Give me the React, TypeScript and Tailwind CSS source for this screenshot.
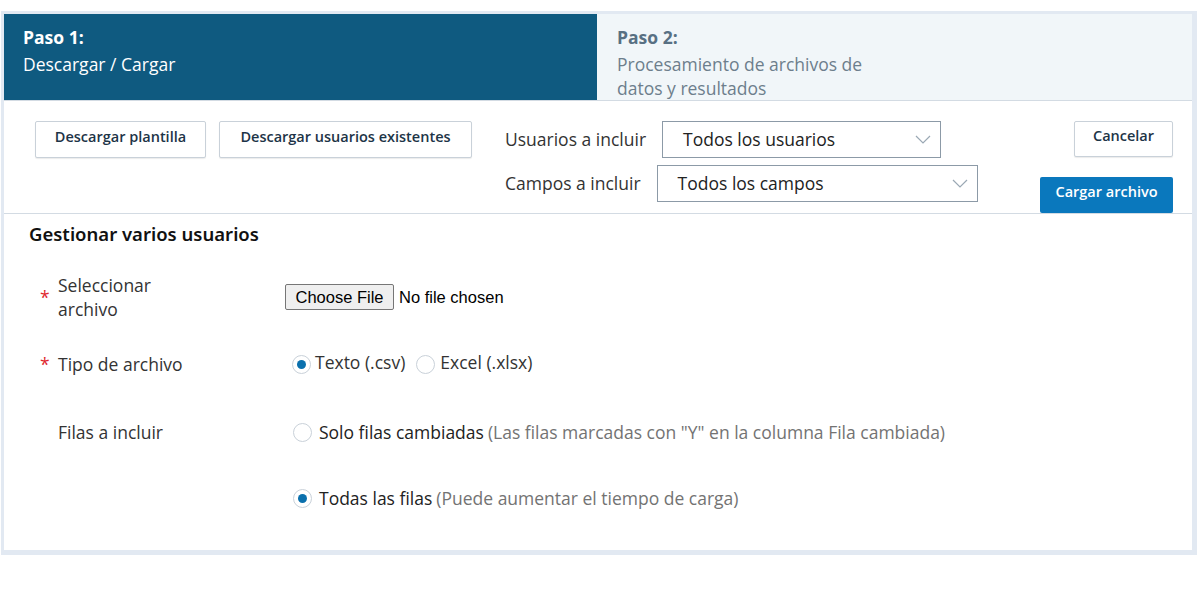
const font = "font-['Open_Sans',_'Noto_Sans',_sans-serif]";

function Radio({ checked }: { checked?: boolean }) {
  return (
    <span className="flex h-[19px] w-[19px] shrink-0 items-center justify-center rounded-full border border-[#c9d1d9] bg-white">
      {checked && <span className="h-[9px] w-[9px] rounded-full bg-[#0a70ad]" />}
    </span>
  );
}

function Chevron() {
  return (
    <svg width="16" height="9" viewBox="0 0 16 9" fill="none" className="shrink-0">
      <polyline points="1,1 8,8 15,1" stroke="#9aa8b4" strokeWidth="1.2" />
    </svg>
  );
}

function Select({ value, width }: { value: string; width: string }) {
  return (
    <div
      className={`flex h-[37px] items-center justify-between border border-[#8c9aa7] bg-white pl-[20px] pr-[9px] text-[17.5px] text-[#222] ${width}`}
    >
      <span>{value}</span>
      <Chevron />
    </div>
  );
}

function OutlineButton({ children, className = "" }: { children: React.ReactNode; className?: string }) {
  return (
    <button
      className={`h-[37px] rounded-[2px] border border-[#c9d1d9] bg-white pb-[6px] text-[14.5px] font-semibold text-[#1d3447] shadow-[0_1px_1px_rgba(0,0,0,0.08)] ${className}`}
    >
      {children}
    </button>
  );
}

export default function App() {
  return (
    <div className={`h-[615px] w-[1204px] bg-white pl-[1px] pt-[11px] ${font}`}>
      <div className="w-[1196px] border-b-[5px] border-l-[3px] border-r-[5px] border-t-[3px] border-[#e2e9f2]">
        {/* steps */}
        <div className="flex h-[87px] border-b border-[#d3dbe3]">
          <div className="w-[593px] bg-[#0f5a80] pl-[19px] pt-[11px] text-[17.5px] leading-[24px] text-white">
            <div className="mb-[3px] font-bold">Paso 1:</div>
            <div>Descargar / Cargar</div>
          </div>
          <div className="flex-1 bg-[#f1f6f9] pl-[20px] pt-[11px] text-[17.5px] leading-[24px]">
            <div className="mb-[3px] font-bold text-[#587083]">Paso 2:</div>
            <div className="max-w-[260px] text-[#6d7e8c]">Procesamiento de archivos de datos y resultados</div>
          </div>
        </div>

        {/* toolbar */}
        <div className="relative flex h-[113px] border-b border-[#d3dbe3] pl-[31px] pr-[19px] pt-[20px]">
          <div className="flex gap-[13px]">
            <OutlineButton className="w-[171px]">Descargar plantilla</OutlineButton>
            <OutlineButton className="w-[253px]">Descargar usuarios existentes</OutlineButton>
          </div>
          <div className="ml-[33px] flex flex-col gap-[7px] text-[17.5px] text-[#333]">
            <div className="flex items-center">
              <span>Usuarios a incluir</span>
              <div className="ml-[16px]">
                <Select value="Todos los usuarios" width="w-[279px]" />
              </div>
            </div>
            <div className="flex items-center">
              <span>Campos a incluir</span>
              <div className="ml-[16px]">
                <Select value="Todos los campos" width="w-[321px]" />
              </div>
            </div>
          </div>
          <div className="ml-auto flex flex-col items-end gap-[20px]">
            <OutlineButton className="w-[99px]">Cancelar</OutlineButton>
            <button className="relative z-10 h-[37px] w-[133px] rounded-[2px] bg-[#0a78bd] pb-[6px] text-[14.5px] font-semibold text-white">
              Cargar archivo
            </button>
          </div>
        </div>

        {/* form */}
        <div className="pb-[40px] pl-[25px] pt-[8px]">
          <h2 className="font-['Noto_Sans',_sans-serif] text-[18.5px] font-semibold leading-[24px] text-[#111]">
            Gestionar varios usuarios
          </h2>

          <div className="mt-[27px] grid grid-cols-[245px_1fr] items-center pl-[11px] text-[17.5px] leading-[24px] text-[#333]">
            <div className="flex items-center">
              <span className="w-[18px] text-[#e0282e]">*</span>
              <span className="max-w-[130px]">Seleccionar archivo</span>
            </div>
            <div className="flex items-center font-['Liberation_Sans',_Arial,_sans-serif] text-[16.5px] text-black">
              <span className="flex h-[26px] w-[109px] items-center justify-center rounded-[2px] border border-[#767676] bg-[#efefef] leading-none">
                Choose File
              </span>
              <span className="ml-[5px]">No file chosen</span>
            </div>

            <div className="mt-[31px] flex items-center">
              <span className="w-[18px] text-[#e0282e]">*</span>
              <span>Tipo de archivo</span>
            </div>
            <div className="mt-[31px] flex items-center pl-[7px]">
              <Radio checked />
              <span className="ml-[4px] -translate-y-[2px]">Texto (.csv)</span>
              <span className="ml-[11px]">
                <Radio />
              </span>
              <span className="ml-[5px] -translate-y-[2px]">Excel (.xlsx)</span>
            </div>

            <div className="mt-[44px] flex items-center">
              <span className="w-[18px]" />
              <span>Filas a incluir</span>
            </div>
            <div className="mt-[44px] flex items-center pl-[8px]">
              <Radio />
              <span className="ml-[7px] text-[#222]">Solo filas cambiadas</span>
              <span className="ml-[4px] text-[#737373]">(Las filas marcadas con "Y" en la columna Fila cambiada)</span>
            </div>

            <div className="mt-[42px]" />
            <div className="mt-[42px] flex items-center pl-[8px]">
              <Radio checked />
              <span className="ml-[7px] text-[#222]">Todas las filas</span>
              <span className="ml-[4px] text-[#737373]">(Puede aumentar el tiempo de carga)</span>
            </div>
          </div>
        </div>
      </div>
    </div>
  );
}
